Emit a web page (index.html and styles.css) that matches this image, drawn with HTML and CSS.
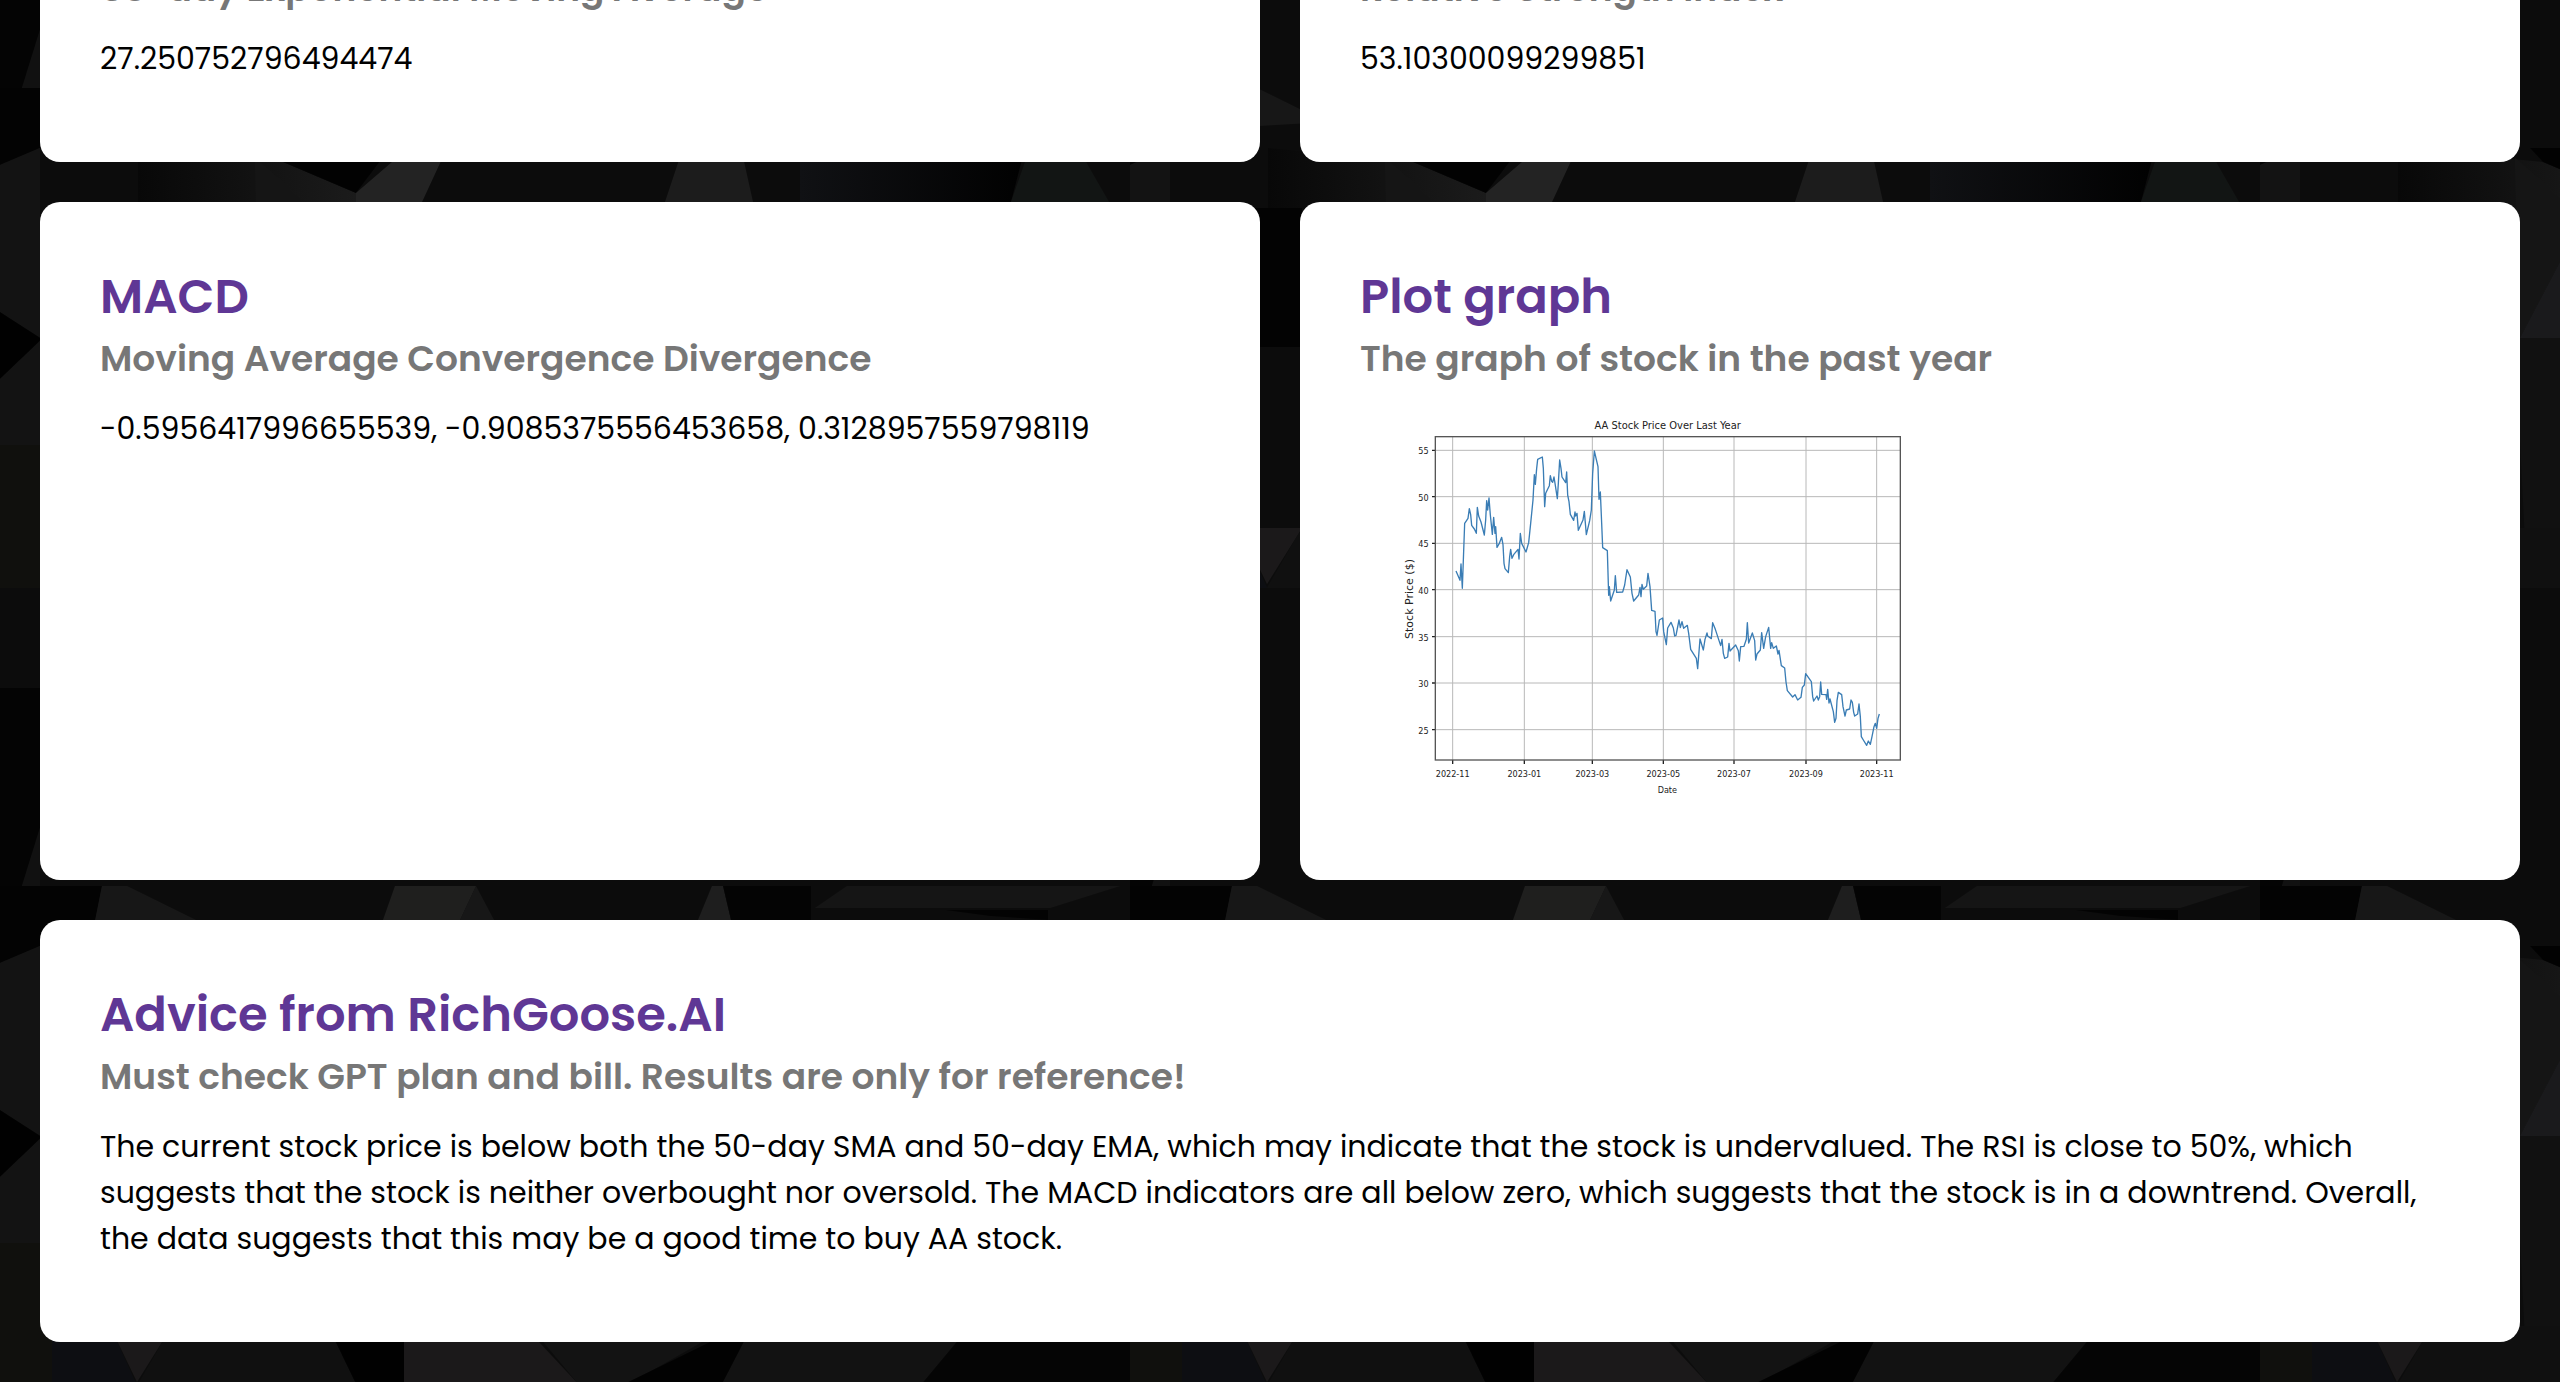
FILE: index.html
```
<!DOCTYPE html>
<html lang="en">

<head>
	<meta charset="utf-8">
	<title>RichGoose.AI</title>
	<link rel="stylesheet" href="styles.css">
</head>

<body>
	<svg class="backdrop" aria-hidden="true">
		<defs>
			<linearGradient id="fade">
				<stop offset="0" stop-color="#080808" />
				<stop offset="1" stop-color="#1b1b1b" />
			</linearGradient>
			<linearGradient id="fade-out">
				<stop offset="0" stop-color="#101114" />
				<stop offset="1" stop-color="#010101" />
			</linearGradient>
			<pattern id="facets" y="88" width="1130" height="798" patternUnits="userSpaceOnUse">
				<rect width="1130" height="798" fill="#0c0c0c" />
				<path fill="#030303" d="M0 0H102L94 40L40 60L0 77Z" />
				<path fill="#171717" d="M102 0H127L196 34L94 40Z" />
				<path fill="#1f1f1e" d="M395 0H476L460 34L443 50L383 34Z" />
				<path fill="#171717" d="M476 0L494 34H460Z" />
				<path fill="#1e1e1e" d="M712 0H723L731 34H698Z" />
				<path fill="#040404" d="M723 0H811V34H731Z" />
				<path fill="#151515" d="M847 0H1120L1050 22H815Z" />
				<path fill="#030303" d="M945 24H1048V34L990 30Z" />
				<path fill="url(#fade)" d="M138 60L283 74L356 105V130L138 120Z" />
				<path fill="#020202" d="M283 74L270 60H390L356 105Z" />
				<path fill="#232323" d="M392 74L400 60H447L422 114L410 140L356 130V105Z" />
				<path fill="#1c1c1c" d="M683 60H741L753 114L700 180L665 114Z" />
				<path fill="url(#fade-out)" d="M800 60H1025L1011 114L900 180L800 114Z" />
				<path fill="#121514" d="M1030 60H1078L1109 114L1050 150L1011 114Z" />
				<path fill="#131313" d="M0 77L40 60V251L0 224Z" />
				<path fill="#010101" d="M0 224L42 251L0 291Z" />
				<path fill="#131313" d="M0 291L42 251V357H0Z" />
				<path fill="#10100d" d="M0 357H40L52 456V500H0Z" />
				<path fill="#030303" d="M125 120H172V259H125Z" />
				<path fill="#151515" d="M255 70L300 110V174L260 250Z" />
				<path fill="#1a1a1c" d="M300 174V250H260Z" />
				<path fill="#111" d="M255 250H300V450H265Z" />
				<path fill="#0d0e12" d="M52 440H110L137 500H52Z" />
				<path fill="#1b191a" d="M110 440H172L137 496Z" />
				<path fill="#101010" d="M172 440H328L357 500H137Z" />
				<path fill="#010101" d="M328 440H404V500H357Z" />
				<path fill="#1b191a" d="M404 440H524L580 500H404Z" />
				<path fill="#131313" d="M530 440H730L625 500H580Z" />
				<path fill="#020202" d="M710 456L755 440L721 500H620Z" />
				<path fill="#121212" d="M752 440H970L920 500H721Z" />
				<path fill="#050505" d="M970 440H1130V500H920Z" />
				<path fill="#040404" d="M0 600H40V740L22 798H0Z" />
				<path fill="#111" d="M40 740V798H22Z" />
			</pattern>
		</defs>
		<rect width="100%" height="100%" fill="url(#facets)" />
	</svg>

	<main class="cards">
		<section class="card">
			<h1>EMA</h1>
			<h2>50-day Exponential Moving Average</h2>
			<p>27.250752796494474</p>
		</section>
		<section class="card">
			<h1>RSI</h1>
			<h2>Relative Strength Index</h2>
			<p>53.10300099299851</p>
		</section>
		<section class="card">
			<h1>MACD</h1>
			<h2>Moving Average Convergence Divergence</h2>
			<p>-0.5956417996655539, -0.9085375556453658, 0.3128957559798119</p>
		</section>
		<section class="card">
			<h1>Plot graph</h1>
			<h2>The graph of stock in the past year</h2>
			<svg class="plot" viewBox="0 0 1800 1260" role="img" aria-label="AA Stock Price Over Last Year">
				<g transform="translate(90 42)">
					<path class="grid" d="M188 110V1080M403 110V1080M607 110V1080M820 110V1080M1032 110V1080M1248 110V1080M1460 110V1080M136 151H1531M136 290H1531M136 430H1531M136 569H1531M136 710H1531M136 849H1531M136 989H1531" />
					<path class="tick" d="M188 1080v12M403 1080v12M607 1080v12M820 1080v12M1032 1080v12M1248 1080v12M1460 1080v12M136 151h-10M136 290h-10M136 430h-10M136 569h-10M136 710h-10M136 849h-10M136 989h-10" />
					<polyline class="price" points="198,513 210,541 213,492 217,565 224,370 234,355 238,326 242,344 245,376 253,387 259,400 262,322 266,348 273,366 283,405 287,360 290,302 293,330 297,294 301,345 307,403 311,352 315,400 317,380 321,442 328,430 335,412 339,434 342,490 345,506 355,518 359,470 362,448 366,475 371,464 384,448 387,477 391,400 395,430 408,456 416,428 422,370 429,300 433,224 436,253 440,205 443,178 457,171 460,205 464,320 467,280 478,257 481,227 485,244 488,247 492,231 496,256 502,296 505,250 509,180 513,205 516,231 527,248 530,216 533,285 537,305 541,343 551,361 555,336 557,348 561,340 565,391 579,360 583,334 589,404 599,362 604,330 608,220 613,153 624,200 627,298 631,276 635,370 638,443 652,452 656,586 658,560 662,603 673,570 676,527 680,577 698,576 704,555 711,509 721,531 726,580 731,603 746,585 750,562 753,590 756,553 760,568 770,558 774,520 780,560 785,631 795,634 798,695 801,706 808,660 818,654 821,695 829,734 833,684 843,667 850,684 854,708 858,706 867,660 871,683 876,665 881,685 892,676 896,700 902,748 919,775 923,806 930,717 940,750 945,718 951,699 953,708 964,716 968,668 976,688 992,737 996,718 1000,760 1004,775 1013,771 1017,730 1020,753 1037,735 1045,752 1048,783 1052,740 1062,739 1069,718 1072,668 1076,729 1087,699 1094,722 1097,780 1101,762 1111,750 1115,698 1121,745 1127,710 1136,682 1142,745 1145,728 1150,745 1159,738 1164,762 1167,751 1174,797 1184,804 1188,846 1192,872 1208,891 1215,884 1223,900 1233,892 1237,862 1243,855 1247,821 1264,845 1268,890 1271,903 1281,888 1285,900 1289,890 1292,846 1295,883 1308,884 1310,898 1313,868 1317,909 1320,897 1330,935 1334,967 1338,955 1341,902 1345,877 1355,884 1359,920 1365,948 1369,930 1379,927 1383,900 1387,907 1391,937 1394,948 1403,942 1407,912 1411,950 1414,1010 1420,1020 1430,1036 1435,1023 1441,1033 1446,1010 1452,980 1456,970 1460,985 1464,955 1468,942" />
					<rect class="frame" x="136" y="110" width="1395" height="970" />
					<g class="label y">
						<text x="116" y="163">55</text>
						<text x="116" y="302">50</text>
						<text x="116" y="442">45</text>
						<text x="116" y="581">40</text>
						<text x="116" y="722">35</text>
						<text x="116" y="861">30</text>
						<text x="116" y="1001">25</text>
					</g>
					<g class="label">
						<text x="188" y="1130">2022-11</text>
						<text x="403" y="1130">2023-01</text>
						<text x="607" y="1130">2023-03</text>
						<text x="820" y="1130">2023-05</text>
						<text x="1032" y="1130">2023-07</text>
						<text x="1248" y="1130">2023-09</text>
						<text x="1460" y="1130">2023-11</text>
						<text x="832" y="1178">Date</text>
					</g>
					<text class="plot-title" x="833" y="88">AA Stock Price Over Last Year</text>
					<text class="y-title" transform="translate(70 597) rotate(-90)">Stock Price ($)</text>
				</g>
			</svg>
		</section>
		<section class="card wide">
			<h1>Advice from RichGoose.AI</h1>
			<h2>Must check GPT plan and bill. Results are only for reference!</h2>
			<p>The current stock price is below both the 50-day SMA and 50-day EMA, which may indicate that the stock is undervalued. The RSI is close to 50%, which suggests that the stock is neither overbought nor oversold. The MACD indicators are all below zero, which suggests that the stock is in a downtrend. Overall, the data suggests that this may be a good time to buy AA stock.</p>
		</section>
	</main>
</body>

</html>
```
FILE: styles.css
```
* {
	box-sizing: border-box;
}

body {
	margin: 0;
	height: 100vh;
	overflow: hidden;
	display: grid;
	align-content: end;
	background: #0c0c0c;
	font-family: Poppins, Inter, sans-serif;
}

.backdrop {
	position: absolute;
	inset: 0;
	width: 100%;
	height: 100%;
	z-index: -1;
}

.cards {
	display: grid;
	grid-template-columns: 1fr 1fr;
	gap: 40px;
	padding: 40px;
}

.card {
	background: white;
	border-radius: 20px;
	padding: 60px;
}

.wide {
	grid-column: 1 / -1;
}

h1 {
	margin: 0;
	color: #5f3795;
	font-size: 48px;
	line-height: 70px;
	font-weight: 600;
}

h2 {
	margin: 0;
	color: #777;
	font-size: 36px;
	line-height: 54px;
	font-weight: 600;
}

p {
	margin: 20px 0;
	font-size: 30px;
	line-height: 46px;
}

.plot {
	display: block;
	width: 600px;
	height: 420px;
	margin-bottom: 14px;
}

.grid {
	stroke: #b8b8b8;
	stroke-width: 3;
}

.tick {
	stroke: #222;
	stroke-width: 4;
}

.frame {
	fill: none;
	stroke: #555;
	stroke-width: 4;
}

.price {
	fill: none;
	stroke: #3a7db5;
	stroke-width: 4;
	stroke-linejoin: round;
}

.label {
	font: 27px "DejaVu Sans Condensed", "DejaVu Sans", sans-serif;
	text-anchor: middle;
	fill: #222;
}

.label.y {
	text-anchor: end;
}

.plot-title {
	font: 33px "DejaVu Sans Condensed", "DejaVu Sans", sans-serif;
	text-anchor: middle;
	fill: #222;
}

.y-title {
	font: 33px "DejaVu Sans", sans-serif;
	text-anchor: middle;
	fill: #222;
}
```
